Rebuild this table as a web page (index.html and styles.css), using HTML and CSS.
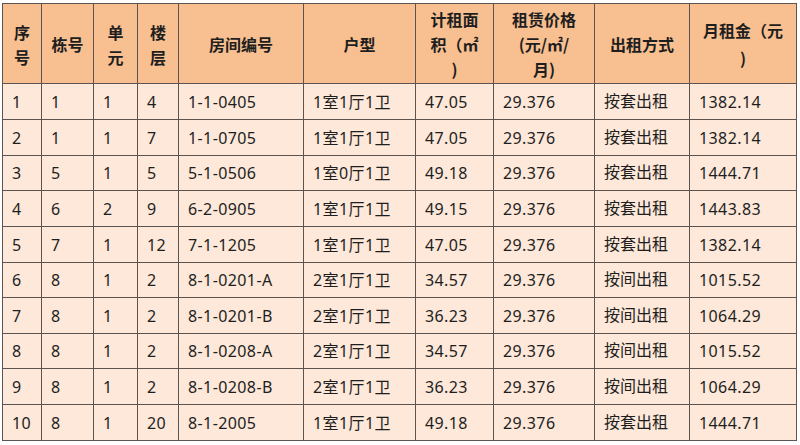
FILE: index.html
```html
<!DOCTYPE html>
<html lang="zh">
<head>
<meta charset="utf-8">
<link rel="stylesheet" href="styles.css">
</head>
<body>
<table class="rent">
  <colgroup>
    <col class="c1"><col class="c2"><col class="c3"><col class="c4"><col class="c5">
    <col class="c6"><col class="c7"><col class="c8"><col class="c9"><col class="c10">
  </colgroup>
  <thead>
    <tr>
      <th>序<br>号</th>
      <th>栋号</th>
      <th>单<br>元</th>
      <th>楼<br>层</th>
      <th>房间编号</th>
      <th>户型</th>
      <th>计租面<br>积（㎡<br>)</th>
      <th>租赁价格<br>(元/㎡/<br>月)</th>
      <th>出租方式</th>
      <th class="up">月租金（元<br>)</th>
    </tr>
  </thead>
  <tbody>
    <tr class="h36"><td>1</td><td>1</td><td>1</td><td>4</td><td>1-1-0405</td><td>1室1厅1卫</td><td>47.05</td><td>29.376</td><td class="zh">按套出租</td><td>1382.14</td></tr>
    <tr class="h36"><td>2</td><td>1</td><td>1</td><td>7</td><td>1-1-0705</td><td>1室1厅1卫</td><td>47.05</td><td>29.376</td><td class="zh">按套出租</td><td>1382.14</td></tr>
    <tr class="h35"><td>3</td><td>5</td><td>1</td><td>5</td><td>5-1-0506</td><td>1室0厅1卫</td><td>49.18</td><td>29.376</td><td class="zh">按套出租</td><td>1444.71</td></tr>
    <tr class="h36"><td>4</td><td>6</td><td>2</td><td>9</td><td>6-2-0905</td><td>1室1厅1卫</td><td>49.15</td><td>29.376</td><td class="zh">按套出租</td><td>1443.83</td></tr>
    <tr class="h36"><td>5</td><td>7</td><td>1</td><td>12</td><td>7-1-1205</td><td>1室1厅1卫</td><td>47.05</td><td>29.376</td><td class="zh">按套出租</td><td>1382.14</td></tr>
    <tr class="h35"><td>6</td><td>8</td><td>1</td><td>2</td><td>8-1-0201-A</td><td>2室1厅1卫</td><td>34.57</td><td>29.376</td><td class="zh">按间出租</td><td>1015.52</td></tr>
    <tr class="h36"><td>7</td><td>8</td><td>1</td><td>2</td><td>8-1-0201-B</td><td>2室1厅1卫</td><td>36.23</td><td>29.376</td><td class="zh">按间出租</td><td>1064.29</td></tr>
    <tr class="h35"><td>8</td><td>8</td><td>1</td><td>2</td><td>8-1-0208-A</td><td>2室1厅1卫</td><td>34.57</td><td>29.376</td><td class="zh">按间出租</td><td>1015.52</td></tr>
    <tr class="h36"><td>9</td><td>8</td><td>1</td><td>2</td><td>8-1-0208-B</td><td>2室1厅1卫</td><td>36.23</td><td>29.376</td><td class="zh">按间出租</td><td>1064.29</td></tr>
    <tr class="h36"><td>10</td><td>8</td><td>1</td><td>20</td><td>8-1-2005</td><td>1室1厅1卫</td><td>49.18</td><td>29.376</td><td class="zh">按套出租</td><td>1444.71</td></tr>
  </tbody>
</table>
</body>
</html>
```
FILE: styles.css
```css
html, body {
  margin: 0;
  padding: 0;
  background: #ffffff;
}
body {
  padding: 3px 0 0 2px;
  font-family: "Noto Sans", "Noto Sans CJK SC", sans-serif;
  color: #1e1e1e;
}
.rent {
  border-collapse: collapse;
  table-layout: fixed;
  width: 794px;
  border: 1px solid #5b5450;
}
.c1 { width: 39px; }
.c2 { width: 52px; }
.c3 { width: 44px; }
.c4 { width: 41px; }
.c5 { width: 125px; }
.c6 { width: 112px; }
.c7 { width: 78px; }
.c8 { width: 101px; }
.c9 { width: 95px; }
.c10 { width: 107px; }
.rent th, .rent td {
  border: 1px solid #5b5450;
  padding: 0 0 0 9px;
  overflow: hidden;
  white-space: nowrap;
}
.rent thead tr {
  height: 80px;
}
.rent th {
  background: #f8bf90;
  font-family: "Noto Sans CJK SC", sans-serif;
  font-weight: 700;
  font-size: 16px;
  line-height: 25px;
  text-align: center;
  vertical-align: middle;
  padding: 2px 4px 0 4px;
}
.rent th.up {
  padding-top: 0;
  line-height: 28px;
}
.rent td {
  background: #fde8d9;
  font-size: 16px;
  line-height: 20px;
  text-align: left;
  vertical-align: middle;
  letter-spacing: 0.4px;
}
.rent td.zh {
  font-family: "Noto Sans CJK SC", sans-serif;
  letter-spacing: 0;
  padding-bottom: 4px;
}
.h36 { height: 36px; }
.h35 { height: 35px; }
```
